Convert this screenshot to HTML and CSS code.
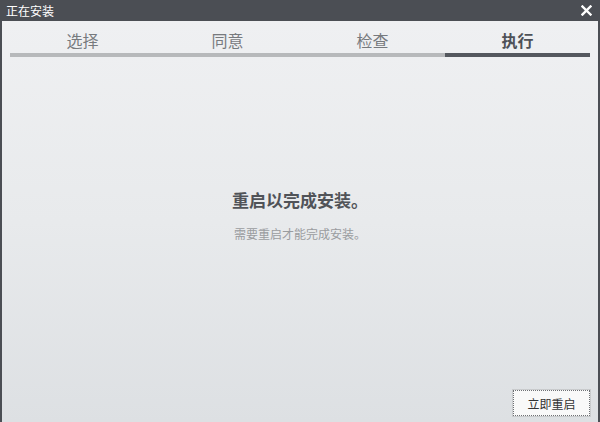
FILE: index.html
```html
<!DOCTYPE html>
<html lang="zh-CN">
<head>
<meta charset="utf-8">
<title>正在安装</title>
<link rel="stylesheet" href="styles.css">
</head>
<body>
<div class="window">
  <div class="titlebar">
    <span class="title">正在安装</span>
    <span class="close" aria-label="关闭">
      <svg width="11" height="11" viewBox="0 0 11 11"><path d="M1.5 1.5 L9.5 9.5 M9.5 1.5 L1.5 9.5" stroke="#fff" stroke-width="2.4" stroke-linecap="square"/></svg>
    </span>
  </div>
  <div class="body">
    <div class="steps">
      <div class="step"><span class="label">选择</span><span class="bar"></span></div>
      <div class="step"><span class="label">同意</span><span class="bar"></span></div>
      <div class="step"><span class="label">检查</span><span class="bar"></span></div>
      <div class="step active"><span class="label">执行</span><span class="bar"></span></div>
    </div>
    <div class="content">
      <div class="heading">重启以完成安装。</div>
      <div class="sub">需要重启才能完成安装。</div>
    </div>
    <div class="footer">
      <button class="btn">立即重启</button>
    </div>
  </div>
</div>
</body>
</html>
```
FILE: styles.css
```css
html, body {
  margin: 0;
  padding: 0;
}
body {
  width: 600px;
  height: 422px;
  overflow: hidden;
  font-family: "Noto Sans CJK SC", "Microsoft YaHei", sans-serif;
}
.window {
  width: 600px;
  height: 422px;
  display: flex;
  flex-direction: column;
  box-sizing: border-box;
  border-left: 2px solid #4b4e54;
  border-right: 2px solid #4b4e54;
}
.titlebar {
  height: 21px;
  flex: none;
  background: #4b4e54;
  display: flex;
  align-items: center;
  justify-content: space-between;
  padding: 0 6px 0 6px;
  margin: 0 -2px;
}
.title {
  color: #ffffff;
  font-size: 12px;
  line-height: 21px;
}
.close {
  display: flex;
  align-items: center;
  padding-right: 2px;
}
.body {
  flex: 1;
  display: flex;
  flex-direction: column;
  background: linear-gradient(to bottom, #eff0f2 0%, #e8eaec 50%, #dde0e3 100%);
}
.steps {
  display: grid;
  grid-template-columns: repeat(4, 145px);
  padding: 0 8px;
  margin-top: 8px;
}
.step {
  display: flex;
  flex-direction: column;
  align-items: center;
}
.label {
  font-size: 16px;
  line-height: 22px;
  color: #777a7e;
  height: 22px;
}
.step.active .label {
  color: #4e5157;
  font-weight: bold;
}
.bar {
  margin-top: 2px;
  width: 100%;
  height: 4px;
  background: #b7b9bb;
}
.step.active .bar {
  background: #54585e;
}
.content {
  flex: 1;
  display: flex;
  flex-direction: column;
  align-items: center;
  padding-top: 131px;
}
.heading {
  font-size: 17px;
  font-weight: bold;
  color: #505358;
  line-height: 24px;
}
.sub {
  margin-top: 14px;
  font-size: 12px;
  color: #9a9c9f;
  line-height: 16px;
}
.footer {
  display: flex;
  justify-content: flex-end;
  padding: 0 8px 6px 0;
}
.btn {
  width: 77px;
  height: 26px;
  font-family: "Noto Sans CJK SC", sans-serif;
  font-size: 12px;
  color: #333333;
  background: #f9f9f9;
  border: 1px dotted #6f7175;
  outline: 1px solid #c9cbcd;
  outline-offset: 0;
  padding: 0;
}
```
